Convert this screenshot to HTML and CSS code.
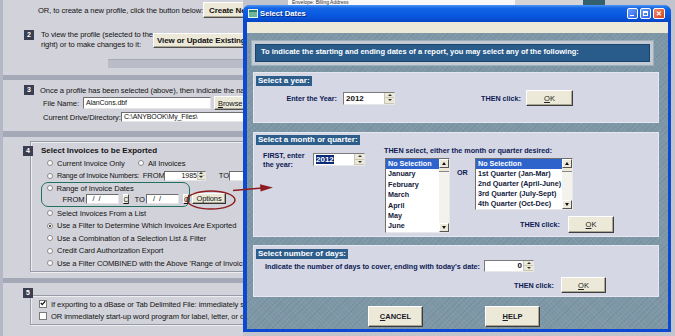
FILE: index.html
```html
<!DOCTYPE html>
<html lang="en">
<head>
  <meta charset="UTF-8">
  <title>Select Dates</title>
  <link rel="stylesheet" href="styles.css">
</head>
<body>
  <div class="app">
    <div class="main">
      <div class="section s-top">
        <div class="create-row">
          <span class="create-text">OR, to create a new profile, click the button below:</span>
          <button class="btn btn-bold create">Create New</button>
        </div>
        <div class="step-row">
          <span class="badge">2</span>
          <span class="step-text">To view the profile (selected to the<br>right) or to make changes to it:</span>
          <button class="btn btn-bold view">View or Update Existing</button>
        </div>
        <div class="hbar"></div>
      </div>

      <div class="section s-file">
        <div class="head-row">
          <span class="badge">3</span>
          <span class="head-text">Once a profile has been selected (above), then indicate the name</span>
        </div>
        <div class="field-row fr-name">
          <span class="f-label l-name">File Name:</span>
          <span class="input in-name">AlanCons.dbf</span>
          <button class="btn browse"><u>B</u>rowse</button>
        </div>
        <div class="field-row fr-dir">
          <span class="f-label l-dir">Current Drive/Directory:</span>
          <span class="input in-dir">C:\ANYBOOK\My_Files\</span>
        </div>
      </div>

      <div class="section s-invoices">
        <div class="box inv-box">
          <div class="inv-head"><span class="badge">4</span><b>Select Invoices to be Exported</b></div>
          <div class="opt-row">
            <span class="radio"></span><span class="w-current">Current Invoice Only</span>
            <span class="radio"></span><span>All Invoices</span>
          </div>
          <div class="opt-row">
            <span class="radio"></span><span class="w-numbers">Range of Invoice Numbers:</span>
            <span class="w-from">FROM</span>
            <span class="input num-in">1985<span class="spin-btns"><i></i><i></i></span></span>
            <span class="w-to">TO</span>
            <span class="input num-in2"></span>
          </div>
          <div class="dates-wrap">
            <div class="green-box">
              <div class="gb-line"><span class="radio"></span><span>Range of Invoice Dates</span></div>
              <div class="gb-line gb-dates">
                <span class="d-from">FROM</span>
                <span class="input date-in">/ &nbsp;/</span>
                <span class="c-btn">C</span>
                <span class="d-to">TO</span>
                <span class="input date-in">/ &nbsp;/</span>
                <span class="c-btn">C</span>
              </div>
            </div>
            <button class="btn options">Options</button>
          </div>
          <div class="opt-row"><span class="radio"></span><span>Select Invoices From a List</span></div>
          <div class="opt-row"><span class="radio on"></span><span>Use a Filter to Determine Which Invoices Are Exported</span></div>
          <div class="opt-row"><span class="radio"></span><span>Use a Combination of a Selection List &amp; Filter</span></div>
          <div class="opt-row"><span class="radio"></span><span>Credit Card Authorization Export</span></div>
          <div class="opt-row"><span class="radio"></span><span>Use a Filter COMBINED with the Above 'Range of Invoice Dates'</span></div>
        </div>
      </div>

      <div class="section s-final">
        <div class="box fin-box">
          <span class="badge fin-badge">5</span>
          <div class="chk-row">
            <span class="check on"><svg width="6" height="6" viewBox="0 0 6 6"><polyline points="0.8,3 2.3,4.6 5.2,1.2" fill="none" stroke="#111" stroke-width="1.3"/></svg></span>
            <span>If exporting to a dBase or Tab Delimited File: immediately save</span>
          </div>
          <div class="chk-row">
            <span class="check"></span>
            <span>OR immediately start-up word program for label, letter, or document</span>
          </div>
        </div>
      </div>
    </div>

    <div class="side">
      <div class="side-top">
        <span class="env">Envelope: Billing Address</span>
        <span class="gray-cell"></span>
        <span class="teal-cell"></span>
      </div>
    </div>
  </div>

  <div class="dialog">
    <div class="titlebar">
      <span class="app-icon"></span>
      <span class="title">Select Dates</span>
      <span class="tb-btn tb-min"><i></i></span>
      <span class="tb-btn tb-max"><i></i></span>
      <span class="tb-btn tb-close">&#x2715;</span>
    </div>
    <div class="menustrip"></div>
    <div class="dlg-body">
      <div class="intro">
        <div class="intro-inner">To indicate the starting and ending dates of a report, you may select any of the following:</div>
      </div>

      <div class="panel p-year">
        <div class="cap">Select a year:</div>
        <div class="year-row">
          <span class="lbl lbl-enter">Enter the Year:</span>
          <span class="spin sp-year"><span class="val">2012</span><span class="spin-btns"><i></i><i></i></span></span>
          <span class="lbl lbl-then1">THEN click:</span>
          <button class="ok ok1"><u>O</u>K</button>
        </div>
      </div>

      <div class="panel p-month">
        <div class="cap">Select a month or quarter:</div>
        <div class="month-body">
          <div class="col-first">
            <span class="lbl first-text">FIRST, enter<br>the year:</span>
            <span class="spin sp-first"><span class="val"><span class="sel">2012</span></span><span class="spin-btns"><i></i><i></i></span></span>
          </div>
          <div class="col-lists">
            <div class="lbl lists-head">THEN select, either the month or quarter desired:</div>
            <div class="lists-row">
              <div class="listbox lb-month">
                <ul>
                  <li class="cur">No Selection</li>
                  <li>January</li>
                  <li>February</li>
                  <li>March</li>
                  <li>April</li>
                  <li>May</li>
                  <li>June</li>
                </ul>
                <div class="sbar"><span class="sb-up"></span><span class="sb-thumb"></span><span class="sb-track"></span><span class="sb-down"></span></div>
              </div>
              <div class="quarter-col">
                <div class="quarter-row">
                  <span class="lbl or">OR</span>
                  <div class="listbox lb-quarter">
                    <ul>
                      <li class="cur">No Selection</li>
                      <li>1st Quarter (Jan-Mar)</li>
                      <li>2nd Quarter (April-June)</li>
                      <li>3rd Quarter (July-Sept)</li>
                      <li>4th Quarter (Oct-Dec)</li>
                    </ul>
                    <div class="sbar"><span class="sb-up"></span><span class="sb-thumb"></span><span class="sb-track"></span><span class="sb-down"></span></div>
                  </div>
                </div>
                <div class="then-row2">
                  <span class="lbl lbl-then2">THEN click:</span>
                  <button class="ok ok2"><u>O</u>K</button>
                </div>
              </div>
            </div>
          </div>
        </div>
      </div>

      <div class="panel p-days">
        <div class="cap">Select number of days:</div>
        <div class="days-row">
          <span class="lbl lbl-days">Indicate the number of days to cover, ending with today's date:</span>
          <span class="spin sp-days"><span class="val">0</span><span class="spin-btns"><i></i><i></i></span></span>
        </div>
        <div class="then-row3">
          <span class="lbl lbl-then3">THEN click:</span>
          <button class="ok ok3"><u>O</u>K</button>
        </div>
      </div>

      <div class="footer">
        <button class="big-btn cancel"><u>C</u>ANCEL</button>
        <button class="big-btn help"><u>H</u>ELP</button>
      </div>
    </div>
  </div>

  <svg class="marks" width="675" height="336" viewBox="0 0 675 336">
    <ellipse cx="211" cy="200" rx="24" ry="9" fill="none" stroke="#8e1b1f" stroke-width="1.4"/>
    <line x1="233" y1="190.5" x2="262" y2="188" stroke="#8e1b1f" stroke-width="1.4"/>
    <polygon points="260,184.2 273,187.6 260.6,191.4" fill="#8e1b1f"/>
  </svg>
</body>
</html>
```

FILE: styles.css
```css
body {
  margin: 0;
  width: 675px;
  height: 336px;
  overflow: hidden;
  position: relative;
  font-family: "Liberation Sans", Arial, sans-serif;
  background: #a4a8b7;
}
.app {
  display: flex;
  height: 336px;
}
.main {
  width: 243px;
  flex: none;
  border-left: 3px solid #b4b7c5;
  box-sizing: border-box;
  font-size: 7.6px;
  letter-spacing: -0.08px;
  color: #121212;
  white-space: nowrap;
}
.main b {
  font-size: 8px;
  letter-spacing: 0;
}
.section {
  background: #d2d3da;
  box-sizing: border-box;
}
.s-top {
  height: 75px;
  padding-top: 2px;
}
.s-file {
  height: 51px;
  margin-top: 5px;
  padding-top: 5px;
}
.s-invoices {
  height: 141px;
  margin-top: 6px;
  padding: 4px 0 0 27px;
}
.s-final {
  height: 53px;
  margin-top: 5px;
  padding: 12px 0 0 27px;
}

.badge {
  display: inline-block;
  width: 10px;
  height: 10px;
  line-height: 10px;
  background: #3a3e50;
  color: #fff;
  font-weight: bold;
  font-size: 7px;
  text-align: center;
  flex: none;
  letter-spacing: 0;
}
.btn {
  font-family: "Liberation Sans", Arial, sans-serif;
  font-size: 7.5px;
  letter-spacing: -0.1px;
  background: #ece9d8;
  color: #111;
  border: 1px solid;
  border-color: #fff #505050 #505050 #fff;
  box-shadow: inset -1px -1px #a9a695;
  padding: 0 3px;
  flex: none;
  white-space: nowrap;
}
.btn-bold {
  font-weight: bold;
  font-size: 8px;
}

.create-row {
  display: flex;
  align-items: center;
  height: 16px;
  padding-left: 35px;
}
.create-text {
  width: 169px;
}
.create {
  height: 16px;
  width: 76px;
  text-align: left;
  padding-left: 5px;
}
.step-row {
  display: flex;
  align-items: flex-start;
  margin-top: 12px;
  height: 20px;
}
.step-row .badge {
  margin-left: 21px;
}
.step-text {
  margin-left: 7px;
  width: 117px;
  line-height: 10px;
  margin-top: 0;
}
.view {
  margin-top: 3px;
  height: 15px;
  width: 100px;
  text-align: left;
  padding-left: 3px;
}
.hbar {
  margin: 9px 0 0 105px;
  height: 8px;
  width: 140px;
  background: #babcc7;
  border-top: 1px solid #a7aab6;
}

.head-row {
  display: flex;
  align-items: center;
  height: 10px;
}
.head-row .badge {
  margin-left: 21px;
}
.head-text {
  margin-left: 6px;
}
.field-row {
  display: flex;
  align-items: center;
}
.fr-name {
  margin-top: 1px;
  height: 14px;
}
.fr-dir {
  margin-top: 1px;
  height: 12px;
}
.f-label {
  padding-left: 40px;
  flex: none;
}
.l-name {
  width: 40px;
}
.l-dir {
  width: 78px;
}
.input {
  display: inline-block;
  position: relative;
  background: #fff;
  border: 1px solid;
  border-color: #6e6e6e #e6e6e6 #e6e6e6 #6e6e6e;
  box-sizing: border-box;
  font-size: 7px;
  letter-spacing: -0.1px;
  padding-left: 2px;
  flex: none;
  overflow: hidden;
}
.in-name {
  width: 128px;
  height: 12px;
  line-height: 10px;
}
.browse {
  margin-left: 3px;
  height: 14px;
  width: 40px;
  text-align: left;
}
.in-dir {
  width: 130px;
  height: 10px;
  line-height: 8px;
}

.box {
  width: 240px;
  box-sizing: border-box;
  border: 1px solid #979ba8;
  box-shadow: 1px 1px #eceef2, inset 1px 1px #eceef2;
}
.inv-box {
  height: 131px;
}
.inv-head {
  display: flex;
  align-items: center;
  margin-top: 3px;
  height: 11px;
}
.inv-head .badge {
  margin-left: -8px;
}
.inv-head b {
  margin-left: 8px;
}
.opt-row {
  display: flex;
  align-items: center;
  height: 12.5px;
  padding-left: 16px;
}
.inv-head + .opt-row {
  margin-top: 1px;
}
.radio {
  display: inline-block;
  width: 6px;
  height: 6px;
  border-radius: 50%;
  background: #fff;
  border: 1px solid #8a8a8a;
  box-sizing: border-box;
  margin-right: 4px;
  flex: none;
  position: relative;
}
.radio.on::after {
  content: "";
  position: absolute;
  left: 1px;
  top: 1px;
  width: 2px;
  height: 2px;
  border-radius: 50%;
  background: #111;
}
.w-current {
  width: 81px;
}
.w-numbers {
  width: 93px;
  font-size: 7.2px;
  letter-spacing: -0.2px;
}
.w-from {
  width: 21px;
}
.num-in {
  width: 42px;
  height: 10px;
  line-height: 8px;
  text-align: right;
  padding-right: 8px;
}
.spin-btns {
  position: absolute;
  right: 0;
  top: 0;
  bottom: 0;
  width: 7px;
  display: flex;
  flex-direction: column;
  background: #ece9d8;
  border-left: 1px solid #c9c6b4;
}
.spin-btns i {
  flex: 1;
  border-bottom: 1px solid #c9c6b4;
  position: relative;
}
.spin-btns i::after {
  content: "";
  position: absolute;
  left: 50%;
  top: 50%;
  margin: -1px 0 0 -2px;
  border-left: 2px solid transparent;
  border-right: 2px solid transparent;
}
.spin-btns i:first-child::after {
  border-bottom: 2px solid #333;
}
.spin-btns i:last-child::after {
  border-top: 2px solid #333;
}
.w-to {
  margin-left: 13px;
  width: 11px;
}
.num-in2 {
  width: 40px;
  height: 10px;
}
.dates-wrap {
  display: flex;
  align-items: flex-end;
  height: 25px;
}
.green-box {
  margin-left: 10px;
  width: 149px;
  height: 25px;
  box-sizing: border-box;
  border: 1.5px solid #22705d;
  border-radius: 7px;
  padding: 0 0 0 4.5px;
}
.gb-line {
  display: flex;
  align-items: center;
  height: 10.5px;
}
.gb-dates {
  padding-left: 16px;
  height: 11px;
}
.date-in {
  width: 33px;
  height: 10px;
  line-height: 8px;
  margin-left: 1px;
  padding-left: 6px;
  font-size: 7.5px;
}
.c-btn {
  display: inline-block;
  width: 6px;
  height: 10px;
  line-height: 9px;
  margin-left: 4px;
  box-sizing: border-box;
  border: 1px solid;
  border-color: #fff #444 #444 #fff;
  background: #ece9d8;
  text-decoration: underline;
  font-size: 6.5px;
  text-align: center;
  flex: none;
}
.d-to {
  margin-left: 6px;
  width: 12px;
}
.options {
  margin: 0 0 3px 2px;
  height: 11px;
  width: 34px;
  line-height: 8px;
  padding: 0 2px;
  border-color: #fff #333 #333 #fff;
}

.fin-box {
  height: 30px;
}
.fin-badge {
  display: block;
  margin: -8px 0 0 -8px;
}
.chk-row {
  display: flex;
  align-items: center;
  height: 12px;
  padding-left: 8px;
}
.check {
  display: inline-block;
  width: 6px;
  height: 6px;
  background: #fff;
  border: 1px solid #7a7a7a;
  margin-right: 4px;
  flex: none;
  line-height: 0;
}
.check svg {
  display: block;
  margin: -1px 0 0 -0.5px;
}

.side {
  flex: 1;
  background: #c2c4cd;
}
.side-top {
  display: flex;
  height: 5px;
  padding-left: 45px;
}
.env {
  width: 227px;
  background: #f7f7f7;
  font-size: 5px;
  line-height: 5px;
  color: #333;
  padding-left: 4px;
  box-sizing: border-box;
  white-space: nowrap;
}
.gray-cell {
  width: 68px;
  background: #d5d5d8;
}
.teal-cell {
  width: 22px;
  background: #345f6c;
}

/* dialog window */
.dialog {
  position: absolute;
  left: 243px;
  top: 5px;
  width: 428px;
  height: 327px;
  box-sizing: border-box;
  background: #0a49d0;
  border-radius: 7px 7px 0 0;
  padding: 0 3px 3px 4px;
  display: flex;
  flex-direction: column;
  font-family: "Liberation Sans", Arial, sans-serif;
  z-index: 1;
}
.titlebar {
  height: 17px;
  margin: 0 -3px 0 -4px;
  padding: 0 6px 0 5px;
  display: flex;
  align-items: center;
  border-radius: 7px 7px 0 0;
  background: linear-gradient(#4c95f5 0%, #1464e6 18%, #0a5ae2 55%, #0850d6 80%, #0644c2 100%);
}
.app-icon {
  width: 8px;
  height: 7px;
  background: #6fb59a;
  border: 1px solid #e8f2ee;
  box-shadow: inset 0 2px #2d7f6c;
  flex: none;
}
.title {
  margin-left: 2px;
  color: #fff;
  font-weight: bold;
  font-size: 7.7px;
  text-shadow: 1px 1px #0a2a80;
}
.tb-btn {
  width: 11px;
  height: 11px;
  box-sizing: border-box;
  border: 1px solid #fff;
  border-radius: 2px;
  background: linear-gradient(135deg, #6d9ff6, #2a62e6);
  margin-left: 2px;
  position: relative;
  flex: none;
}
.tb-min {
  margin-left: auto;
}
.tb-min i {
  position: absolute;
  left: 2px;
  bottom: 2px;
  width: 4px;
  height: 1.5px;
  background: #fff;
}
.tb-max i {
  position: absolute;
  left: 2px;
  top: 2px;
  width: 5px;
  height: 5px;
  box-sizing: border-box;
  border: 1px solid #fff;
  border-top-width: 2px;
}
.tb-close {
  width: 12px;
  background: linear-gradient(135deg, #f08a6a, #d8401a);
  color: #fff;
  font-size: 7px;
  font-weight: bold;
  line-height: 9px;
  text-align: center;
}
.menustrip {
  height: 11px;
  background: #ece9d8;
  flex: none;
}
.dlg-body {
  flex: 1;
  background-color: #7d97a6;
  background-image:
    repeating-linear-gradient(45deg, rgba(255,255,255,0.05) 0 1px, transparent 1px 3px),
    repeating-linear-gradient(-45deg, rgba(0,0,0,0.05) 0 1px, transparent 1px 4px);
  padding: 8px 0 0 6px;
  display: flex;
  flex-direction: column;
  align-items: flex-start;
  color: #0c1a52;
  font-size: 7.2px;
  font-weight: bold;
  white-space: nowrap;
}
.intro {
  margin-left: -1px;
  width: 401px;
  height: 24px;
  box-sizing: border-box;
  border: 3px solid #c4cad3;
  box-shadow: 0 0 0 1px #9fb0bd;
}
.intro-inner {
  height: 100%;
  background: #2a5c8b;
  border: 1px solid #1b446c;
  box-sizing: border-box;
  color: #fff;
  font-size: 7.5px;
  line-height: 14px;
  padding-left: 5px;
}
.panel {
  width: 406px;
  box-sizing: border-box;
  background: #d5d7e5;
  border: 1px solid #e6e8f1;
  padding: 3px 2px 0 2px;
  margin-top: 7px;
  display: flex;
  flex-direction: column;
  align-items: flex-start;
}
.p-year {
  height: 51px;
}
.p-month {
  height: 105px;
  margin-top: 9px;
  padding-top: 2px;
}
.p-days {
  height: 52px;
  margin-top: 8px;
}
.cap {
  background: #2d5d8b;
  color: #fff;
  font-size: 8px;
  height: 10px;
  line-height: 10px;
  padding: 0 2px;
}
.lbl {
  display: inline-block;
  flex: none;
}
.year-row {
  display: flex;
  align-items: center;
  margin-top: 4px;
  height: 16px;
}
.lbl-enter {
  width: 81px;
  text-align: right;
}
.spin {
  position: relative;
  display: inline-block;
  background: #fff;
  border: 1px solid;
  border-color: #7b7b7b #e8e8e8 #e8e8e8 #7b7b7b;
  box-sizing: border-box;
  flex: none;
  color: #111;
}
.spin .val {
  display: block;
  padding-left: 2px;
  font-size: 8px;
  line-height: 11px;
}
.spin .spin-btns {
  width: 9px;
}
.sp-year {
  margin-left: 6px;
  width: 52px;
  height: 13px;
}
.lbl-then1 {
  width: 126px;
  text-align: right;
}
.ok {
  font-family: "Liberation Sans", Arial, sans-serif;
  font-size: 7.5px;
  color: #222;
  background: #ece9d8;
  border: 1px solid;
  border-color: #fff #3e3e3e #3e3e3e #fff;
  box-shadow: inset -1px -1px #aaa794;
  padding: 0;
  flex: none;
}
.ok1 {
  margin-left: 5px;
  width: 47px;
  height: 16px;
}
.month-body {
  display: flex;
  align-items: flex-start;
}
.col-first {
  display: flex;
  align-items: flex-start;
  margin: 7px 0 0 7px;
}
.first-text {
  width: 50px;
  line-height: 8.5px;
}
.sp-first {
  margin-top: 1px;
  width: 52px;
  height: 13px;
}
.sel {
  background: #0b2a78;
  color: #fff;
}
.col-lists {
  margin-left: 19px;
  margin-top: 2px;
}
.lists-head {
  display: block;
  line-height: 7px;
}
.lists-row {
  display: flex;
  align-items: flex-start;
  margin-top: 4px;
}
.listbox {
  display: flex;
  background: #fff;
  border: 1px solid;
  border-color: #6f6f6f #e8e8e8 #e8e8e8 #6f6f6f;
  box-sizing: border-box;
  flex: none;
}
.listbox ul {
  list-style: none;
  margin: 0;
  padding: 0;
  flex: 1;
}
.listbox li {
  height: 10.4px;
  line-height: 10.4px;
  padding-left: 2px;
  color: #121a3a;
}
.listbox li.cur {
  background: #2f63cc;
  color: #fff;
}
.lb-month {
  margin-left: 1px;
  width: 65px;
  height: 75px;
}
.lb-quarter {
  width: 98px;
  height: 52px;
}
.lb-quarter li {
  height: 10px;
  line-height: 10px;
}
.sbar {
  width: 10px;
  display: flex;
  flex-direction: column;
  background: #f3f2ec;
}
.sb-up,
.sb-down {
  height: 9px;
  background: #ece9d8;
  border: 1px solid;
  border-color: #fff #555 #555 #fff;
  box-sizing: border-box;
  position: relative;
}
.sb-up::after,
.sb-down::after {
  content: "";
  position: absolute;
  left: 2px;
  top: 2px;
  border-left: 2px solid transparent;
  border-right: 2px solid transparent;
}
.sb-up::after {
  border-bottom: 3px solid #111;
}
.sb-down::after {
  border-top: 3px solid #111;
}
.sb-thumb {
  height: 3px;
  background: #ece9d8;
  border-bottom: 1px solid #888;
}
.sb-track {
  flex: 1;
}
.quarter-col {
  margin-left: 7px;
}
.quarter-row {
  display: flex;
  align-items: flex-start;
}
.or {
  width: 18px;
  margin-top: 11px;
  line-height: 8px;
}
.then-row2 {
  display: flex;
  align-items: center;
  margin-top: 6px;
}
.lbl-then2 {
  width: 103px;
  text-align: right;
}
.ok2 {
  margin-left: 8px;
  width: 46px;
  height: 17px;
}
.days-row {
  display: flex;
  align-items: center;
  margin-top: 1px;
  height: 12px;
}
.lbl-days {
  margin-left: 9px;
  width: 219px;
}
.sp-days {
  width: 50px;
  height: 12px;
}
.sp-days .val {
  text-align: right;
  padding-right: 11px;
  line-height: 10px;
}
.then-row3 {
  display: flex;
  align-items: center;
  margin-top: 5px;
  height: 16px;
}
.lbl-then3 {
  width: 298px;
  text-align: right;
}
.ok3 {
  margin-left: 7px;
  width: 45px;
  height: 16px;
}
.footer {
  display: flex;
  margin-top: 9px;
}
.big-btn {
  font-family: "Liberation Sans", Arial, sans-serif;
  font-size: 7.5px;
  font-weight: bold;
  color: #1a1a2a;
  background: #ece9d8;
  border: 1px solid;
  border-color: #fff #3a3a3a #3a3a3a #fff;
  box-shadow: inset -1px -1px #a9a692;
  width: 55px;
  height: 21px;
  padding: 0;
}
.cancel {
  margin-left: 115px;
}
.help {
  margin-left: 62px;
}
.marks {
  position: absolute;
  left: 0;
  top: 0;
  z-index: 2;
  pointer-events: none;
}
```
